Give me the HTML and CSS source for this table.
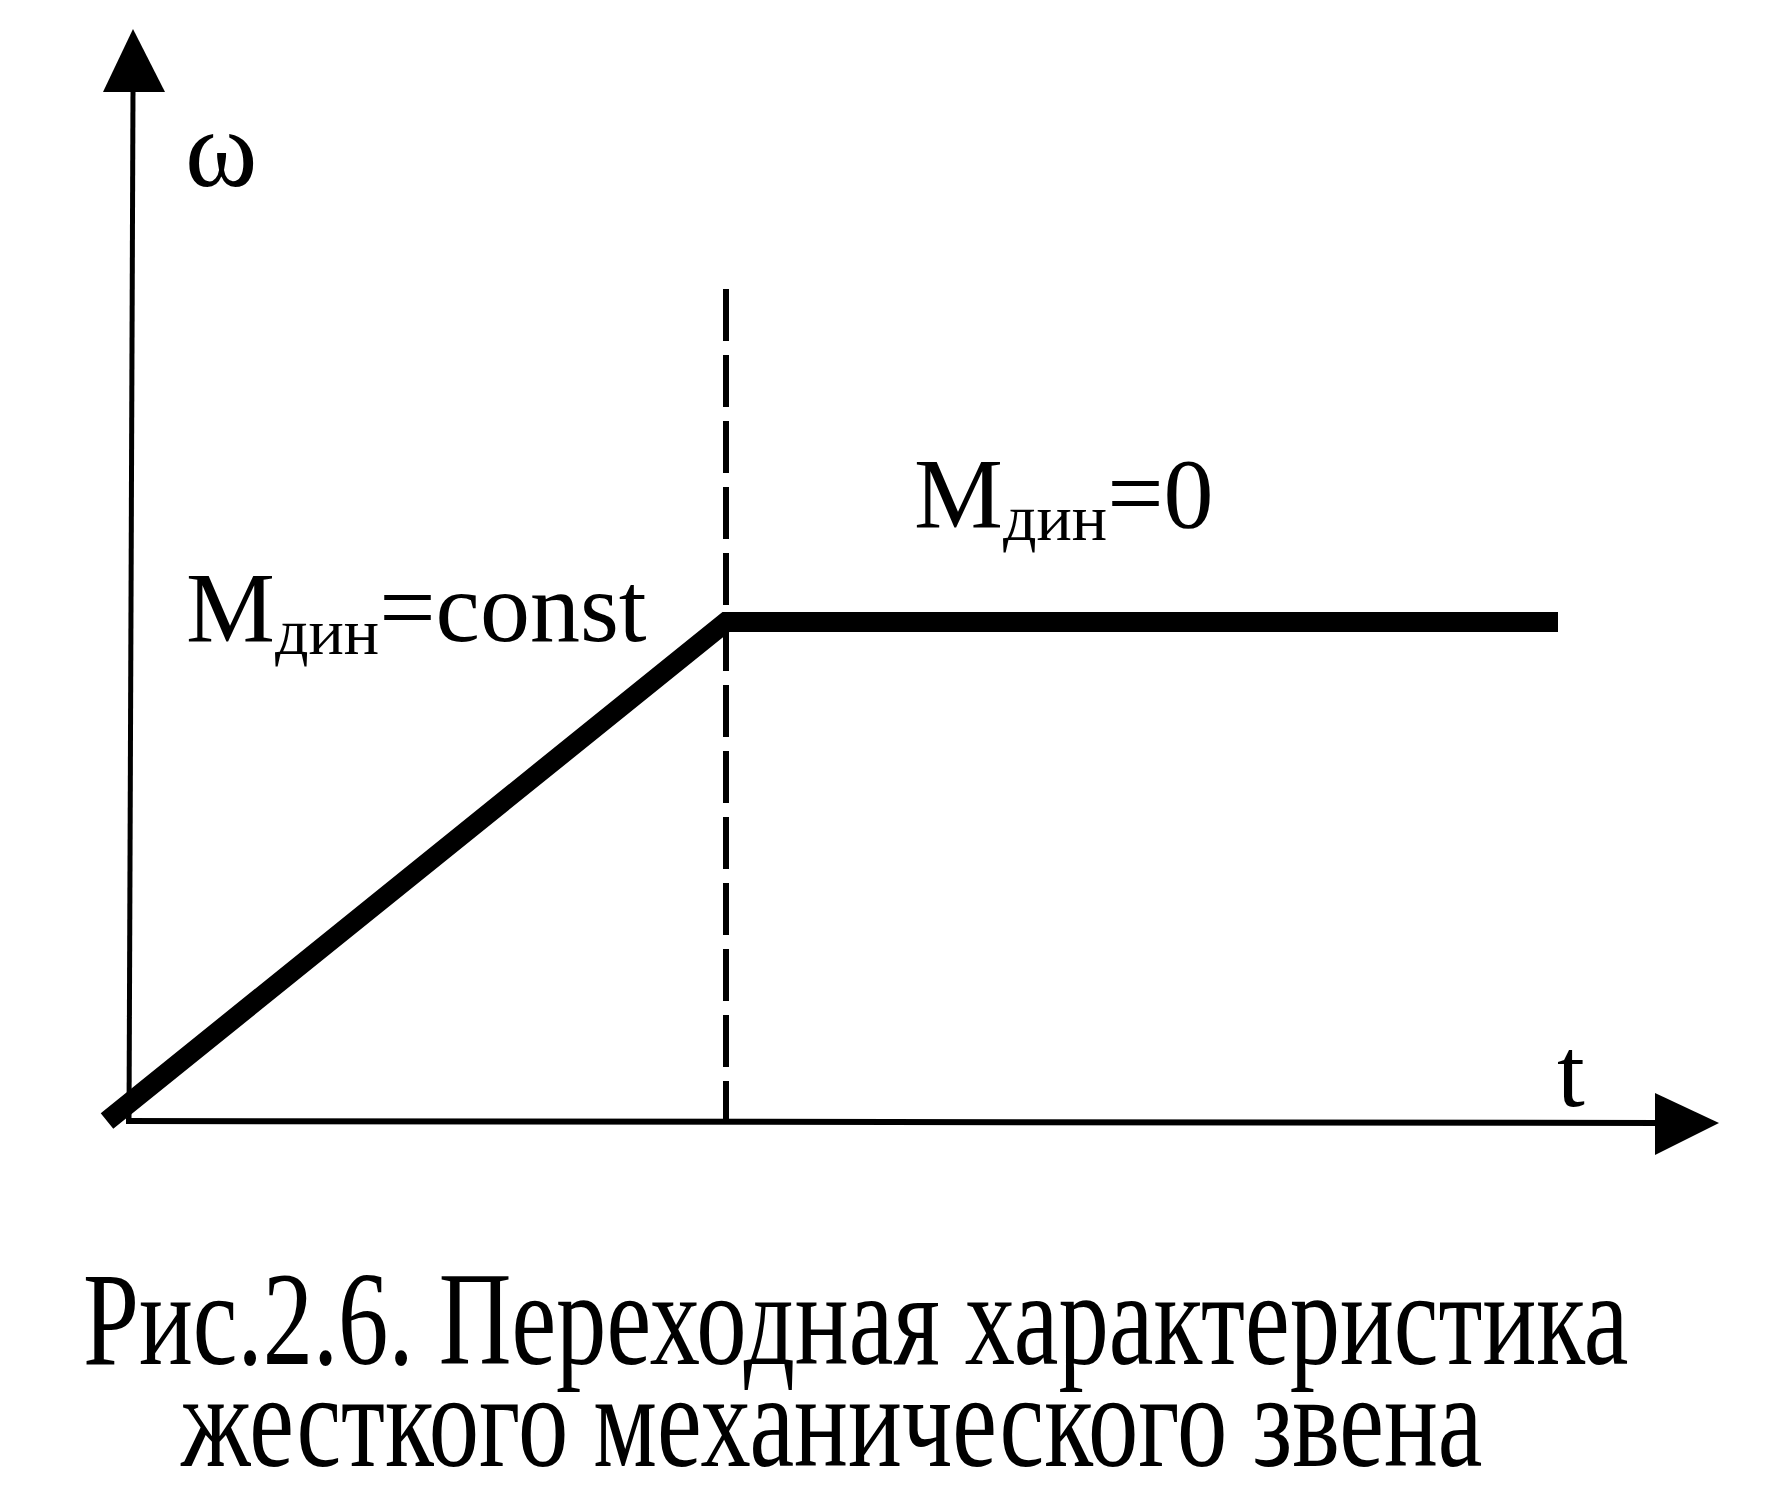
FILE: index.html
```html
<!DOCTYPE html>
<html lang="ru">
<head>
<meta charset="utf-8">
<title>Рис.2.6. Переходная характеристика жесткого механического звена</title>
<link rel="stylesheet" href="styles.css">
</head>
<body>
<main class="page">
  <figure class="figure">
    <div class="plot">
      <svg class="plot-svg" width="1784" height="1241" viewBox="0 0 1784 1241" aria-hidden="true">
        <!-- vertical axis -->
        <line x1="133" y1="88" x2="129" y2="1124" stroke="#000" stroke-width="5"/>
        <polygon points="133,29 103,92 165,92" fill="#000"/>
        <!-- horizontal axis -->
        <line x1="126" y1="1121" x2="1660" y2="1123" stroke="#000" stroke-width="6"/>
        <polygon points="1655,1093 1719,1123 1655,1155" fill="#000"/>
        <!-- dashed boundary -->
        <line x1="726" y1="289" x2="726" y2="1122" stroke="#000" stroke-width="6" stroke-dasharray="52 14"/>
        <!-- characteristic -->
        <polyline points="107,1121 726,622 1558,622" fill="none" stroke="#000" stroke-width="20" stroke-linejoin="miter" stroke-linecap="butt"/>
      </svg>
      <span class="label label-omega">ω</span>
      <span class="label label-t">t</span>
      <span class="label label-const">M<sub class="sub">дин</sub>=const</span>
      <span class="label label-zero">M<sub class="sub">дин</sub>=0</span>
    </div>
    <figcaption class="caption">
      <span class="caption-line caption-line-1">Рис.2.6. Переходная характеристика</span>
      <span class="caption-line caption-line-2">жесткого механического звена</span>
    </figcaption>
  </figure>
</main>
</body>
</html>
```

FILE: styles.css
```css
html, body {
  margin: 0;
  padding: 0;
  background: #fff;
}

body {
  font-family: "Liberation Serif", "Times New Roman", serif;
  color: #000;
  width: 1784px;
  height: 1502px;
  overflow: hidden;
}

.page {
  display: block;
}

.figure {
  margin: 0;
  display: flex;
  flex-direction: column;
}

.plot {
  position: relative;
  width: 1784px;
  height: 1241px;
}

.plot-svg {
  position: absolute;
  left: 0;
  top: 0;
  display: block;
}

.label {
  position: absolute;
  font-size: 100px;
  line-height: 1;
  white-space: nowrap;
}

.sub {
  font-size: 66px;
  vertical-align: -13px;
  line-height: 0;
}

.label-omega {
  font-size: 110px;
  left: 185px;
  top: 94px;
}

.label-t {
  left: 1557px;
  top: 1023px;
}

.label-const {
  left: 186px;
  top: 558px;
}

.label-zero {
  left: 914px;
  top: 444px;
}

.caption {
  display: flex;
  flex-direction: column;
  align-items: flex-start;
  font-size: 134px;
  line-height: 102px;
  padding-top: 27px;
  padding-left: 83px;
}

.caption-line {
  display: block;
  white-space: nowrap;
  transform-origin: left center;
  transform: scaleX(0.751);
}

.caption-line-2 {
  margin-left: 98px;
}
```
